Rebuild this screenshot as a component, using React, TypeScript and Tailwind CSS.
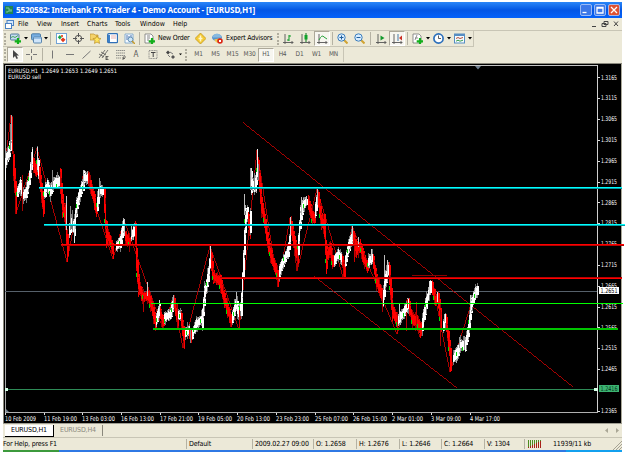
import React from "react";

type Pt = [number, number];
type Leg = { c: "w" | "r"; p: Pt[] };

const legs: Leg[] = [
  { c: "w", p: [[5, 163], [7, 156], [9, 150], [11, 134]] },
  { c: "r", p: [[12, 128], [13, 165], [16, 203]] },
  { c: "w", p: [[17, 192], [20, 185], [23, 195], [26, 193], [29, 178], [32, 156]] },
  { c: "r", p: [[33, 163], [36, 171]] },
  { c: "w", p: [[37, 158], [38, 168]] },
  { c: "r", p: [[39, 174], [41, 190], [43, 207]] },
  { c: "w", p: [[44, 193], [47, 185], [50, 192], [53, 184], [59, 181]] },
  { c: "r", p: [[60, 180], [62, 205], [65, 216], [67, 245]] },
  { c: "w", p: [[69, 230], [71, 222], [74, 228], [76, 208], [79, 195], [83, 183], [84, 177], [87, 178]] },
  { c: "r", p: [[88, 178], [92, 192], [96, 209]] },
  { c: "w", p: [[97, 204], [99, 189], [102, 191]] },
  { c: "r", p: [[104, 200], [106, 233], [110, 241], [113, 250]] },
  { c: "w", p: [[116, 246], [120, 242], [123, 226]] },
  { c: "r", p: [[125, 237], [129, 242]] },
  { c: "w", p: [[131, 235], [134, 231]] },
  { c: "r", p: [[135, 234], [136, 258], [138, 284], [142, 296], [148, 296], [152, 308], [155, 322]] },
  { c: "w", p: [[156, 320], [159, 310]] },
  { c: "r", p: [[160, 314], [163, 322]] },
  { c: "w", p: [[164, 318], [170, 314], [173, 303]] },
  { c: "r", p: [[174, 303], [177, 319]] },
  { c: "w", p: [[178, 315], [181, 317]] },
  { c: "r", p: [[181, 320], [184, 340]] },
  { c: "w", p: [[185, 333], [189, 330]] },
  { c: "r", p: [[189, 334], [191, 336]] },
  { c: "w", p: [[192, 334], [196, 324], [202, 319], [204, 296], [208, 275], [210, 259]] },
  { c: "r", p: [[211, 261], [213, 276], [220, 282], [223, 296], [227, 309], [231, 320]] },
  { c: "w", p: [[232, 318], [236, 303], [238, 312], [241, 305], [243, 265], [245, 220], [247, 213]] },
  { c: "r", p: [[248, 220], [250, 230]] },
  { c: "w", p: [[250, 222], [251, 182], [254, 187], [256, 180], [257, 168]] },
  { c: "r", p: [[258, 170], [261, 204], [264, 219], [268, 245], [272, 260], [278, 277]] },
  { c: "w", p: [[279, 272], [283, 261], [288, 250], [290, 235]] },
  { c: "r", p: [[291, 228], [294, 242], [297, 257]] },
  { c: "w", p: [[298, 245], [300, 218], [303, 205], [306, 202]] },
  { c: "r", p: [[308, 203], [312, 216], [314, 218]] },
  { c: "w", p: [[315, 210], [317, 197]] },
  { c: "r", p: [[318, 199], [321, 220], [324, 226], [326, 257], [330, 249], [332, 261]] },
  { c: "w", p: [[334, 261], [338, 254], [341, 258]] },
  { c: "r", p: [[342, 261], [344, 270]] },
  { c: "w", p: [[345, 261], [349, 244], [352, 236]] },
  { c: "r", p: [[353, 237], [356, 249], [360, 246], [364, 261], [367, 266]] },
  { c: "w", p: [[368, 262], [372, 258]] },
  { c: "r", p: [[373, 262], [376, 280], [382, 296]] },
  { c: "w", p: [[383, 298], [385, 280], [388, 270]] },
  { c: "r", p: [[389, 274], [392, 310], [397, 322]] },
  { c: "w", p: [[398, 320], [403, 313], [408, 304]] },
  { c: "r", p: [[409, 307], [412, 319], [417, 322], [421, 329]] },
  { c: "w", p: [[422, 325], [426, 302], [430, 287]] },
  { c: "r", p: [[432, 287], [435, 299], [438, 300], [441, 323]] },
  { c: "w", p: [[443, 326], [445, 319]] },
  { c: "r", p: [[446, 324], [449, 347], [451, 363]] },
  { c: "w", p: [[453, 358], [457, 353], [460, 345], [465, 345], [468, 330], [471, 305], [474, 295], [477, 290]] },
];

const zigzag =
  "5,165 11,115 16,213 37,148 67,262 84,171 113,259 124,220 163,329 173,297 183,348 210,246 239,330 257,150 278,287 290,218 297,271 317,189 343,277 352,226 397,334 407,300 420,337 432,281 450,372 476,288";

const spikes: [number, number, number, string][] = [
  [5, 160, 180, "#fff"], [11, 115, 140, "#aaa"], [12, 123, 150, "#f00"], [10, 124, 150, "#888"], [15, 195, 214, "#a00"], [22, 175, 211, "#a00"],
  [37, 147, 170, "#ddd"], [31, 152, 170, "#ccc"], [43, 200, 215, "#f00"], [52, 170, 190, "#888"], [60, 172, 190, "#c00"], [66, 196, 230, "#ccc"],
  [67, 240, 262, "#f00"], [70, 206, 230, "#888"], [72, 210, 230, "#777"], [74, 222, 243, "#ddd"], [83, 170, 190, "#ccc"], [89, 172, 190, "#a00"], [99, 178, 195, "#999"], [113, 245, 259, "#f00"],
  [124, 219, 236, "#ccc"], [131, 225, 236, "#bbb"], [147, 282, 296, "#ccc"], [143, 296, 312, "#b00"], [159, 300, 312, "#ddd"], [173, 296, 308, "#aaa"],
  [184, 330, 348, "#f00"], [177, 304, 328, "#b00"], [190, 330, 343, "#888"], [210, 245, 260, "#ddd"], [236, 292, 305, "#bbb"], [239, 310, 330, "#c00"],
  [244, 194, 215, "#bbb"], [250, 168, 190, "#999"], [251, 168, 180, "#ddd"], [257, 149, 172, "#eee"], [258, 164, 180, "#777"], [254, 173, 190, "#888"],
  [278, 270, 287, "#f00"], [290, 217, 235, "#ccc"], [297, 250, 270, "#b00"], [301, 197, 215, "#bbb"], [306, 196, 205, "#ccc"], [317, 189, 205, "#bbb"],
  [326, 240, 274, "#f00"], [343, 262, 276, "#c00"], [352, 226, 240, "#ccc"], [358, 237, 247, "#ccc"], [354, 240, 262, "#c00"], [371, 249, 260, "#ccc"],
  [384, 255, 280, "#bbb"], [387, 260, 275, "#ccc"], [382, 290, 312, "#a00"], [397, 315, 334, "#c00"], [399, 304, 320, "#ccc"], [407, 299, 308, "#c00"], [406, 312, 331, "#b00"],
  [416, 302, 325, "#b00"], [420, 326, 338, "#f00"], [429, 281, 295, "#ddd"], [432, 281, 295, "#f00"], [437, 292, 302, "#ddd"], [440, 310, 346, "#a00"], [444, 314, 322, "#bbb"],
  [450, 355, 372, "#f00"], [459, 337, 348, "#999"], [464, 336, 350, "#999"], [470, 295, 310, "#ccc"], [475, 287, 300, "#eee"],
];

const rnd = (n: number) => {
  const v = Math.sin(n * 91.7 + 13.1) * 4371.3;
  return v - Math.floor(v);
};

function Candles() {
  const out: React.ReactElement[] = [];
  let k = 0;
  legs.forEach((leg) => {
    for (let i = 0; i < leg.p.length - 1; i++) {
      const [x0, y0] = leg.p[i];
      const [x1, y1] = leg.p[i + 1];
      for (let x = x0; x <= x1; x++) {
        k++;
        const t = (x - x0) / (x1 - x0);
        const y = y0 + (y1 - y0) * t;
        const step = Math.min(Math.abs((y1 - y0) / (x1 - x0)), 16);
        const h = 5 + step + rnd(k) * 4;
        const long = k % 4 === 0 ? 5 : 2;
        const up = 1 + rnd(k + 500) * long;
        const dn = 1 + rnd(k + 900) * long;
        const wick = leg.c === "w" ? (k % 2 ? "#b0b0b0" : "#777") : k % 2 ? "#e00000" : "#980000";
        out.push(<rect key={"a" + k} x={x} y={Math.round(y - h / 2 - up)} width={1} height={Math.round(h + up + dn)} fill={wick} />);
        out.push(<rect key={"b" + k} x={x} y={Math.round(y - h / 2)} width={k % 5 ? 2 : 1} height={Math.round(h)} fill={leg.c === "w" ? "#fff" : "#f00"} />);
        if (k % 8 === 0) out.push(<rect key={"g" + k} x={x - 1} y={Math.round(y - 2 + rnd(k) * 5)} width={1} height={4} fill="#0d0" />);
      }
    }
  });
  return <g shapeRendering="crispEdges">{out}</g>;
}

const prices = ["1.3165", "1.3115", "1.3065", "1.3015", "1.2965", "1.2915", "1.2865", "1.2815", "1.2765", "1.2715", "1.2665", "1.2615", "1.2565", "1.2515", "1.2465", "", "1.2365"];
const dates: [string, number, number][] = [
  ["10 Feb 2009", 5, 31], ["11 Feb 19:00", 44, 33], ["13 Feb 03:00", 82, 33], ["16 Feb 13:00", 121, 33], ["17 Feb 21:00", 160, 33], ["19 Feb 05:00", 198, 34],
  ["20 Feb 13:00", 237, 33], ["23 Feb 23:00", 276, 33], ["25 Feb 07:00", 315, 33], ["26 Feb 15:00", 353, 34], ["2 Mar 01:00", 392, 31], ["3 Mar 09:00", 431, 30], ["4 Mar 17:00", 470, 30],
];

function Chart() {
  return (
    <svg className="block shrink-0" width="622" height="363" viewBox="3 62 622 363" fontFamily="'DejaVu Sans Condensed','DejaVu Sans',sans-serif" fontSize="6.5" fill="#fff">
      <g shapeRendering="crispEdges">
        <rect x="3" y="62" width="619" height="363" fill="#ece9d8" />
        <rect x="3" y="63" width="619" height="1" fill="#8a887c" />
        <rect x="3" y="63" width="1" height="361" fill="#8a887c" />
        <rect x="4" y="64" width="617" height="359" fill="#000" />
        <rect x="621" y="64" width="1" height="359" fill="#aaa898" />
        <rect x="5" y="65" width="593" height="1" fill="#c4c4c4" />
        <rect x="5" y="65" width="1" height="348" fill="#a8a8a8" />
        <rect x="597" y="65" width="1" height="348" fill="#d0d0d0" />
        <rect x="5" y="412" width="593" height="1" fill="#b0b0b0" />
        <rect x="3" y="423" width="619" height="1" fill="#a09e92" />
        <rect x="5" y="291" width="592" height="1" fill="#56606a" />
        <rect x="5" y="389" width="592" height="1" fill="#2e8b57" />
      </g>
      <g stroke="#b80000" strokeWidth="0.9" fill="none" shapeRendering="crispEdges">
        <path d="M243 122.5L573 387M314 276L457 388" />
        <polyline points={zigzag} />
      </g>
      <Candles />
      <g shapeRendering="crispEdges">
        {spikes.map(([x, a, b, c], i) => (
          <rect key={i} x={x} y={a} width={1} height={b - a} fill={c} />
        ))}
      </g>
      {prices.map((p, i) => {
        const y = 77.3 + i * 20.84;
        return p ? (
          <g key={i}>
            <rect x="598" y={Math.round(y)} width="2" height="1" fill="#ddd" />
            <text x="601" y={y + 2.2} textLength="16" lengthAdjust="spacingAndGlyphs">{p}</text>
          </g>
        ) : null;
      })}
      {dates.map(([d, x, w]) => (
        <g key={d}>
          <rect x={x} y="413" width="1" height="2" fill="#ddd" />
          <text x={x} y="421" textLength={w} lengthAdjust="spacingAndGlyphs">{d}</text>
        </g>
      ))}
      <g shapeRendering="crispEdges">
        <path d="M39 187h583v1H39zM44 224h581v1H44z" fill="#00ffff" />
        <path d="M39 188h583v1H39zM44 225h581v1H44z" fill="#009ca4" />
        <path d="M61 244h563v1H61zM220 278h402v1H220z" fill="#ff0000" />
        <path d="M61 245h563v1H61zM220 277h402v1H220z" fill="#b80000" />
        <rect x="412" y="275" width="35" height="1" fill="#8c0000" />
        <rect x="151" y="303" width="472" height="1" fill="#00ff00" />
        <rect x="153" y="328" width="465" height="2" fill="#00c400" />
        <rect x="599" y="287" width="20" height="7" fill="#fff" />
        <rect x="599" y="385" width="20" height="7" fill="#3cb371" />
        <rect x="5" y="388" width="3" height="3" fill="#d8ffe8" />
        <rect x="594" y="388" width="4" height="3" fill="#d8ffe8" />
      </g>
      <text x="600.500" y="293" fill="#000" textLength="17" lengthAdjust="spacingAndGlyphs">1.2651</text>
      <text x="600.500" y="391" fill="#03351a" textLength="17" lengthAdjust="spacingAndGlyphs">1.2416</text>
      <text x="8" y="72.500" fontSize="6" textLength="109" lengthAdjust="spacingAndGlyphs">EURUSD,H1&#160; 1.2649 1.2653 1.2649 1.2651</text>
      <text x="8" y="79" fontSize="6" textLength="33" lengthAdjust="spacingAndGlyphs">EURUSD sell</text>
      <path d="M475 66h6l-3 3.500z" fill="#708090" />
      <path d="M6 409l3 3H6z" fill="#708090" />
    </svg>
  );
}

const plus = <path d="M8 5v6.500M4.700 8.300h6.500" stroke="#12b01a" strokeWidth="2.200" />;
const axes = <path d="M2 1v10M0 9.500h10M8.500 8l1.500 1.500-1.500 1.500" stroke="#555" strokeWidth="0.9" fill="none" />;
const page = <path d="M1 1h6l2 2v7H1z" fill="#fff" stroke="#777" strokeWidth="0.8" />;

const art: Record<string, React.ReactElement> = {
  newchart: <><rect x="0.500" y="1" width="8.500" height="6" rx="1" fill="#c5dcf0" stroke="#557d9c" /><path d="M1 4.500l2-1 2 1 3-2" stroke="#4aa35d" />{plus}</>,
  profiles: <><rect x="0.500" y="0.800" width="9" height="6" rx="1" fill="#77aee2" stroke="#4d7ea8" /><rect x="2.500" y="4" width="8" height="6" rx="1" fill="#cfe5fa" stroke="#5a86ae" /><path d="M3 5.200h7" stroke="#7fb0df" /></>,
  watch: <><rect x="0.500" y="0.500" width="10" height="10" fill="#fff" stroke="#72a3d6" /><path d="M3.800 2l2 2.300-2 2.200-2-2.200z" fill="#1ba548" /><path d="M7 4.500l2.500 2.300L7 9.200 4.600 6.800z" fill="#e33b20" /><path d="M5 2h2v2H5z" fill="#e9603c" /></>,
  cross: <g stroke="#555" fill="none"><circle cx="5.500" cy="5.500" r="3.200" /><path d="M5.500 0v4M5.500 7v4M0 5.500h4M7 5.500h4" /></g>,
  folder: <><path d="M0 1h4l1 1h3v5H0z" fill="#f5d36a" stroke="#bd9332" strokeWidth="0.7" /><path d="M7 2.500l1.300 2.700 2.600.3-1.900 2 .5 2.900L7 9l-2.500 1.400.5-2.900-1.900-2 2.600-.3z" fill="#ffe45c" stroke="#b88a1e" strokeWidth="0.7" /></>,
  terminal: <><rect x="0.700" y="0.700" width="9.800" height="9" rx="1" fill="#fff" stroke="#2f70b8" strokeWidth="1.300" /><path d="M1 2h2v7H1z" fill="#3b7fc7" /><path d="M4 3h5M4 5h5" stroke="#c66" strokeWidth=".5" /></>,
  tester: <><path d="M1 1h8v9H1z" fill="#f4faff" stroke="#6f9cc8" strokeWidth="0.8" /><path d="M3 2v5M5 3v4M7 2v3" stroke="#5379b3" /><circle cx="6.500" cy="6.500" r="2.400" fill="#cfe6f8" stroke="#4b7fa8" strokeWidth="0.8" /><path d="M8 8l3 3" stroke="#c59b2c" strokeWidth="1.500" /></>,
  order: <>{page}<path d="M3 3h3M3 5h3M3 7h2" stroke="#555" strokeWidth="0.7" />{plus}</>,
  meta: <><path d="M5.500 0L11 5.500 5.500 11 0 5.500z" fill="#f4cb35" stroke="#bb8d14" strokeWidth="0.7" /><path d="M5.500 2.500v6M3.500 5.500h4" stroke="#fff6cb" strokeWidth="1.500" /></>,
  expert: <><ellipse cx="5" cy="4.500" rx="5" ry="3.500" fill="#5995cf" /><path d="M0 3.500q5-6 10 0l-1 1H1z" fill="#87b9df" /><path d="M2 6.500q3 5 5 2V5.500z" fill="#efc44e" /><circle cx="8" cy="8" r="2.800" fill="#db2817" /><rect x="7" y="7" width="2" height="2" fill="#fff" /></>,
  bars: <>{axes}<path d="M6 2v6M6 3h2M4 7h2" stroke="#0a9b23" /></>,
  candles: <>{axes}<path d="M6 0v9" stroke="#087b1b" /><rect x="4.500" y="2" width="3" height="4.500" fill="#10a32a" /></>,
  line: <>{axes}<path d="M2 7q3-6 5-3l3 2" stroke="#27a23b" fill="none" /></>,
  zin: <><path d="M7 7l3.500 3.500" stroke="#d1a332" strokeWidth="2" /><circle cx="4.500" cy="4.500" r="3.700" fill="#d8edff" stroke="#3b7dbc" /><path d="M2.500 4.500h4M4.500 2.500v4" stroke="#205f9e" /></>,
  zout: <><path d="M7 7l3.500 3.500" stroke="#d1a332" strokeWidth="2" /><circle cx="4.500" cy="4.500" r="3.700" fill="#d8edff" stroke="#3b7dbc" /><path d="M2.500 4.500h4" stroke="#205f9e" /></>,
  scroll: <>{axes}<path d="M4.500 2.500l4 2.500-4 2.500z" fill="#159a2d" /></>,
  shift: <>{axes}<path d="M6 1v7" stroke="#477aa7" /><path d="M10 2.500v5L7 5z" fill="#cc3025" /></>,
  indicators: <>{page}<path d="M3 7l2-5M3 5h3" stroke="#666" strokeWidth=".7" />{plus}</>,
  clock: <><circle cx="5.500" cy="5.500" r="4.600" fill="#fff" stroke="#2d70bb" strokeWidth="1.700" /><path d="M5.500 2.500v3h2.500" stroke="#333" fill="none" strokeWidth="0.8" /></>,
  template: <><rect x="0.500" y="1" width="10" height="9" fill="#f5fbff" stroke="#568dc2" /><path d="M1 2h9" stroke="#568dc2" strokeWidth="2" /><path d="M2 5.500l2-1 2 1 3-1" stroke="#b34c38" fill="none" /><path d="M2 8.200l2-1 2 1 3-1" stroke="#3b9d4e" fill="none" /></>,
  cursor: <path d="M3 1v8l2-2 1.500 3 1.500-.7L6.500 6.500H9z" fill="#444" />,
  hair: <path d="M5.500 0v4M5.500 7v4M0 5.500h4M7 5.500h4" stroke="#777" />,
  vline: <path d="M5.500 1.500v8" stroke="#777" />,
  hline: <path d="M2 5.500h8" stroke="#777" />,
  diag: <path d="M1.500 9.500L9.500 2" stroke="#777" />,
  channel: <><path d="M1 9l6-8M4 9l6-8M1 5l5 3M3 3l5 3" stroke="#555" strokeWidth="0.8" /><path d="M8 7.500h2.500M8 9h2M8 10.500h2.500M8 7v4" stroke="#333" strokeWidth=".7" /></>,
  fibo: <><path d="M1 1.500h9M1 4h9M1 6.500h9M1 9h5" stroke="#777" strokeWidth="0.8" strokeDasharray="1.500 .5" /><path d="M8 11V8h3M8 9.500h2" stroke="#333" strokeWidth=".7" fill="none" /></>,
  tbox: <><rect x="1" y="1.500" width="8" height="8" fill="none" stroke="#777" strokeWidth="0.8" strokeDasharray="1 .6" /><path d="M3 3.500h4.500M5.200 3.500v4.500" stroke="#444" /></>,
  shapes: <><path d="M1 3.500l2-2 2 2-2 2z" fill="#444" /><path d="M6 8l2-2 2 2-2 2z" fill="#555" /><path d="M3 6l2 2M5 3l3 2" stroke="#777" /></>,
};

const Icon = ({ n }: { n: string }) => (
  <svg className="block shrink-0" width="11" height="11" viewBox="0 0 11 11" fill="none">{art[n]}</svg>
);
const Drop = ({ w }: { w: string }) => (
  <span className={`flex shrink-0 items-center justify-center ${w}`}>
    <svg width="4" height="3" viewBox="0 0 4 3"><path d="M0 0h4L2 2.500z" fill="#000" /></svg>
  </span>
);
const Cell = ({ w, n, on }: { w: string; n: string; on?: boolean }) => (
  <span className={`flex h-[15px] shrink-0 items-center justify-center ${w} ${on ? "border border-[#aca899] border-r-white border-b-white bg-[#f7f6f0]" : ""}`}>
    <Icon n={n} />
  </span>
);
const Sep = ({ w }: { w: string }) => (
  <span className={`flex shrink-0 justify-center ${w}`}><i className="h-[13px] w-px bg-[#b5b2a3]" /></span>
);
const Grip = ({ w }: { w: string }) => (
  <span className={`flex shrink-0 justify-center ${w}`}><i className="h-3 border-l-2 border-dotted border-[#b0ad9e]" /></span>
);

const frames: [string, string][] = [["M1", "w-[17px]"], ["M5", "w-[17px]"], ["M15", "w-[17px]"], ["M30", "w-[17px]"], ["H1", "w-4"], ["H4", "w-[17px]"], ["D1", "w-[17px]"], ["W1", "w-[17px]"], ["MN", "w-[17px]"]];
const menu: [string, string][] = [["File", "w-[19px]"], ["View", "w-6"], ["Insert", "w-[26px]"], ["Charts", "w-7"], ["Tools", "w-[25px]"], ["Window", "w-[33px]"], ["Help", "w-5"]];
const stats: [string, string][] = [["Default", "w-[66px]"], ["2009.02.27 09:00", "w-[61px]"], ["O: 1.2658", "w-[43px]"], ["H: 1.2676", "w-[43px]"], ["L: 1.2646", "w-[42px]"], ["C: 1.2664", "w-[43px]"], ["V: 1304", "w-[40px]"]];

export default function App() {
  return (
    <div className="h-[452px] w-[625px] overflow-hidden bg-white pt-[2px] pl-[3px] font-['DejaVu_Sans_Condensed','DejaVu_Sans',sans-serif] text-[7px] leading-none whitespace-nowrap text-black">
      <header className="flex h-4 w-[619px] items-center bg-linear-to-b from-[#2a86f8] via-[#0456e4] to-[#0562fa] pr-[2px] pl-[2px]">
        <svg className="shrink-0" width="8" height="8" viewBox="0 0 8 8"><path d="M0 0h8v8H0z" fill="#218653" /><path d="M1 2h3v2h3M1 6h2V5h4" stroke="#7ac79b" fill="none" /></svg>
        <b className="ml-[3px] font-['Noto_Sans',sans-serif] text-[8.2px] tracking-[-0.19px] text-white">5520582: Interbank FX Trader 4 - Demo Account - [EURUSD,H1]</b>
        <div className="ml-auto flex gap-[2px]">
          {[["M2.500 8.500h4", "#3c78e8"], ["M3 3.500h6v5.500h-6zM3 4h6", "#3c78e8"], ["M3 3l6 6M9 3l-6 6", "#e05232"]].map(([d, c]) => (
            <svg key={d} width="12" height="12" viewBox="0 0 12 12"><rect x=".5" y=".5" width="11" height="11" rx="1.500" fill={c} stroke="#b8cdf8" strokeWidth="0.8" /><path d={d} stroke="#fff" strokeWidth="1.300" fill="none" /></svg>
          ))}
        </div>
      </header>

      <nav className="flex h-[13px] w-[619px] items-center border-b border-[#c8c5b5] bg-[#ece9d8] pr-[3px] pl-[2px]">
        <svg className="mr-[4px] shrink-0" width="9" height="9" viewBox="0 0 9 9"><rect x="2" y=".5" width="6.500" height="5" fill="#d5e8fb" stroke="#4a82c4" /><rect x=".5" y="3.500" width="6" height="5" fill="#fff" stroke="#4a82c4" /></svg>
        {menu.map(([t, w]) => <span key={t} className={`shrink-0 ${w}`}>{t}</span>)}
        <svg className="ml-auto" width="28" height="8" viewBox="0 0 28 8" fill="none" stroke="#444"><path d="M1 6.500h4M13 1.500h4v3h-4zM11 3.500h4v3h-4zM23 1.500l4 4.500M27 1.500L23 6" /></svg>
      </nav>

      <div className="flex h-[31px] w-[619px] flex-col bg-[#ece9d8]">
        <div className="flex h-4 w-[471px] items-center border-r border-b border-[#c8c5b5]">
          <Grip w="w-1" /><Cell w="w-4" n="newchart" /><Drop w="w-[5px]" /><Cell w="w-4" n="profiles" /><Drop w="w-1" />
          <Sep w="w-[5px]" /><Cell w="w-4" n="watch" /><Cell w="w-[18px]" n="cross" /><Cell w="w-4" n="folder" /><Cell w="w-[18px]" n="terminal" /><Cell w="w-4" n="tester" />
          <Sep w="w-[5px]" /><Cell w="w-[15px]" n="order" /><span className="w-[35px] shrink-0 pl-px tracking-[-0.25px]">New Order</span><Cell w="w-[17px]" n="meta" /><Cell w="w-4" n="expert" />
          <span className="w-[50px] shrink-0 pl-px tracking-[-0.2px]">Expert Advisors</span><Grip w="w-[5px]" />
          <Cell w="w-[17px]" n="bars" /><Cell w="w-[17px]" n="candles" /><Cell w="w-4" n="line" on /><Sep w="w-[5px]" />
          <Cell w="w-[15px]" n="zin" /><Cell w="w-[18px]" n="zout" /><Sep w="w-[5px]" /><Cell w="w-4" n="scroll" /><Cell w="w-4" n="shift" on /><Sep w="w-[5px]" />
          <Cell w="w-[15px]" n="indicators" /><Drop w="w-[5px]" /><Cell w="w-4" n="clock" /><Drop w="w-[5px]" /><Cell w="w-4" n="template" /><Drop w="w-[5px]" />
        </div>
        <div className="flex h-[15px] w-[341px] items-center border-r border-[#c8c5b5] text-[#555]">
          <Grip w="w-1" /><Cell w="w-4" n="cursor" on /><Cell w="w-[17px]" n="hair" /><Sep w="w-[5px]" /><Cell w="w-[15px]" n="vline" /><Cell w="w-[18px]" n="hline" /><Cell w="w-4" n="diag" /><Cell w="w-[18px]" n="channel" /><Cell w="w-4" n="fibo" />
          <span className="w-4 shrink-0 text-center text-[8px]">A</span><Cell w="w-[18px]" n="tbox" /><Cell w="w-[17px]" n="shapes" /><Drop w="w-[3px]" /><Grip w="w-2" />
          {frames.map(([t, w]) => (
            <span key={t} className={`flex h-[14px] shrink-0 items-center justify-center text-[6.5px] tracking-[-0.2px] ${w} ${t === "H1" ? "border border-[#aca899] border-r-white border-b-white bg-[#f7f6f0]" : ""}`}>{t}</span>
          ))}
        </div>
      </div>

      <Chart />

      <div className="flex h-[13px] w-[619px] items-start border-b border-[#c8c5b5] bg-[#ece9d8] pl-[2px]">
        <span className="flex h-[12px] w-[49px] items-center justify-center border-r border-b border-black bg-white tracking-[-0.15px]">EURUSD,H1</span>
        <span className="flex h-[11px] w-[49px] items-center justify-center border-r border-[#8a887c] tracking-[-0.15px] text-[#8a887c]">EURUSD,H4</span>
        <svg className="mt-[3px] mr-[3px] ml-auto" width="14" height="5" viewBox="0 0 14 5"><path d="M3 0v5L0 2.500zM11 0v5l3-2.500z" fill="#aaa796" /></svg>
      </div>
      <footer className="flex h-[12px] w-[619px] items-center bg-[#ece9d8] text-[7px] tracking-[-0.15px]">
        <span className="w-[183px] shrink-0">For Help, press F1</span>
        {stats.map(([t, w]) => <span key={t} className={`flex h-[10px] shrink-0 items-center border-l border-[#b5b2a3] pl-[2px] ${w}`}>{t}</span>)}
        <span className="flex h-[10px] items-center border-l border-[#b5b2a3] pl-[3px]">
          <svg width="15" height="8" viewBox="0 0 15 8" shapeRendering="crispEdges">
            {[0, 2, 4, 6, 8, 10, 12].map((x, i) => <g key={x}><rect x={x} width="1" height={7 - i} fill="#4d8c20" /><rect x={x} y={7 - i} width="1" height={i + 1} fill="#a82018" /></g>)}
          </svg>
        </span>
        <span className="ml-[10px]">11939/11 kb</span>
        <svg className="ml-auto self-end" width="9" height="9" viewBox="0 0 9 9"><path d="M0 9L9 0M3 9l6-6M6 9l3-3" stroke="#a5a293" /></svg>
      </footer>
      <div className="flex h-[2px] w-[619px]">
        <i className="w-[56px] bg-[#3c9a3c]" /><i className="w-[507px] bg-[#2f78e4]" /><i className="w-[56px] bg-[#13a0ee]" />
      </div>
    </div>
  );
}
